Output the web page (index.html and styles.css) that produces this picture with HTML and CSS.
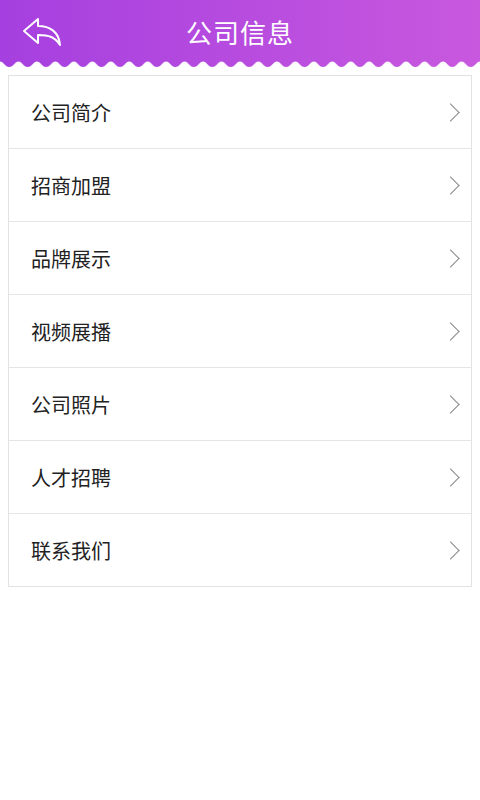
FILE: index.html
```html
<!DOCTYPE html>
<html lang="zh">
<head>
<meta charset="utf-8">
<link rel="stylesheet" href="styles.css">
</head>
<body>
<header class="topbar">
  <div class="bar">
    <svg class="back" width="40" height="30" viewBox="0 0 40 30">
      <path d="M2 14 L16 2 L16 9 C28 9 37 15 38 28 C33 20 27 18 16 18 L16 26 Z" fill="none" stroke="#fff" stroke-width="2" stroke-linejoin="round"/>
    </svg>
    <h1 class="title">公司信息</h1>
  </div>
  <svg class="wave" width="480" height="8" viewBox="0 0 480 8">
    <defs>
      <linearGradient id="g" gradientUnits="userSpaceOnUse" x1="0" x2="480" y1="0" y2="0">
        <stop offset="0" stop-color="#a53fdf"/>
        <stop offset="1" stop-color="#c858de"/>
      </linearGradient>
      <pattern id="p" width="18.46" height="8" patternUnits="userSpaceOnUse">
        <path d="M0 0 H18.46 V1.5 C15 1.5 13.5 7 9.23 7 C5 7 3.5 1.5 0 1.5 Z" fill="#fff"/>
      </pattern>
      <mask id="m">
        <rect x="0" y="0" width="480" height="8" fill="url(#p)"/>
      </mask>
    </defs>
    <rect x="0" y="0" width="480" height="8" fill="url(#g)" mask="url(#m)"/>
  </svg>
</header>
<ul class="list">
  <li class="item"><span>公司简介</span><i class="chev"></i></li>
  <li class="item"><span>招商加盟</span><i class="chev"></i></li>
  <li class="item"><span>品牌展示</span><i class="chev"></i></li>
  <li class="item"><span>视频展播</span><i class="chev"></i></li>
  <li class="item"><span>公司照片</span><i class="chev"></i></li>
  <li class="item"><span>人才招聘</span><i class="chev"></i></li>
  <li class="item"><span>联系我们</span><i class="chev"></i></li>
</ul>
</body>
</html>
```
FILE: styles.css
```css
html, body {
  margin: 0;
  padding: 0;
  background: #fff;
  font-family: "Noto Sans CJK SC", "Noto Sans", sans-serif;
}
.topbar {
  width: 480px;
}
.bar {
  height: 60px;
  background: linear-gradient(90deg, #a53fdf, #c858de);
  display: flex;
  align-items: center;
  justify-content: center;
  position: relative;
}
.back {
  position: absolute;
  left: 22px;
  top: 17px;
}
.title {
  margin: 0;
  color: #fff;
  font-size: 26px;
  font-weight: 400;
  letter-spacing: 1px;
  line-height: 1;
  padding-top: 3px;
}
.wave {
  display: block;
  width: 480px;
  height: 8px;
}
.list {
  list-style: none;
  margin: 7px 8px 0;
  padding: 0;
  border: 1px solid #e2e2e2;
}
.item {
  height: 72px;
  display: flex;
  align-items: center;
  justify-content: space-between;
  padding: 0 14px 0 22px;
  border-top: 1px solid #e6e6e6;
  font-size: 20px;
  color: #222;
}
.item:first-child {
  border-top: none;
}
.chev {
  width: 12px;
  height: 12px;
  border-top: 1.5px solid #888;
  border-right: 1.5px solid #888;
  transform: rotate(45deg);
}
```
